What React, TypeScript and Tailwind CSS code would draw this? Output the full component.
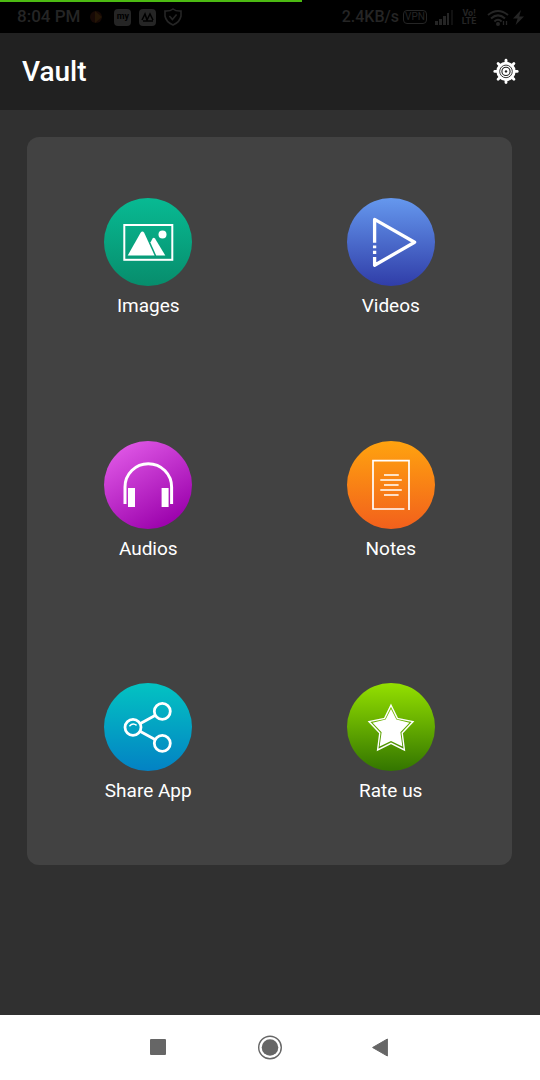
import React from "react";

interface MenuItem {
  label: string;
  from: string;
  to: string;
  diagonal?: boolean;
  glyph: React.ReactNode;
}

const menuItems: MenuItem[] = [
  {
    label: "Images",
    from: "#08ba93",
    to: "#078d6c",
    glyph: (
      <>
        <rect x="20.3" y="27" width="48" height="34.8" strokeWidth="2" />
        <path
          d="M23.7 57.4L36.6 34.8Q38.4 32.4 40.2 34.8L50.6 57.4Z"
          fill="#fff"
          stroke="none"
        />
        <path
          d="M46.4 44.4L48.6 40.6Q49.8 39 51 40.6L61.3 57.4H52.2Z"
          fill="#fff"
          stroke="none"
        />
        <circle cx="58.5" cy="36.6" r="4" fill="#fff" stroke="none" />
      </>
    ),
  },
  {
    label: "Videos",
    from: "#6598ee",
    to: "#303da8",
    glyph: (
      <path
        d="M27.6 44.8V21.4L67.6 44.3L27.6 67.2V59M27.6 47.6V50.2M27.6 52.8V56"
        strokeWidth="3.3"
        strokeLinejoin="round"
      />
    ),
  },
  {
    label: "Audios",
    from: "#e45eea",
    to: "#9a00ab",
    diagonal: true,
    glyph: (
      <>
        <path d="M21 63V46A23.3 23.3 0 0 1 67.6 46V63" strokeWidth="3" />
        <rect x="24" y="47" width="7" height="19" fill="#fff" stroke="none" />
        <rect x="57.6" y="47" width="7" height="19" fill="#fff" stroke="none" />
      </>
    ),
  },
  {
    label: "Notes",
    from: "#ffa30f",
    to: "#f2601c",
    glyph: (
      <path
        d="M57.4 68H26V19.6H62V69M37 34H51.8M33.3 39H54.8M37 44H51.6M33.3 49H54.8M37 54H51.6"
        strokeWidth="1.7"
      />
    ),
  },
  {
    label: "Share App",
    from: "#03c3c2",
    to: "#0382c4",
    glyph: (
      <>
        <circle cx="29" cy="44.3" r="8" strokeWidth="2.8" />
        <circle cx="58.3" cy="28.3" r="8" strokeWidth="2.8" />
        <circle cx="58.3" cy="60.3" r="8" strokeWidth="2.8" />
        <path d="M36.4 40.4L51 32.4M36.4 48.4L51 56.4" strokeWidth="2.8" />
        <path d="M25.4 43.2Q28.8 39.4 32.6 42.4" strokeWidth="1.4" />
      </>
    ),
  },
  {
    label: "Rate us",
    from: "#94e000",
    to: "#337500",
    glyph: (
      <>
        <path
          d="M44 22.2L50.4 35.4L66 38.6L55.2 50L57.4 67L44 60.4L30.6 67L32.8 50L22 38.6L37.6 35.4Z"
          strokeWidth="1.4"
        />
        <path
          d="M44 26L49.4 36.6L62.4 39.8L53.4 49.2L55.4 63.6L44 58L32.6 63.6L34.6 49.2L25.6 39.8L38.6 36.6Z"
          fill="#fff"
          stroke="none"
        />
      </>
    ),
  },
];

const gearTeeth = [0, 45, 90, 135, 180, 225, 270, 315];

function StatusBar() {
  return (
    <div className="h-[33px] bg-black text-[#252525]">
      <div className="h-[2px] w-[56%] bg-[#4cba12]"></div>
      <div className="flex h-[30px] items-center justify-between pl-[17px] pr-4">
        <div className="flex items-center gap-2">
          <span className="text-[17px] font-medium">8:04 PM</span>
          <svg className="h-[18px] w-[18px]" viewBox="0 0 18 18">
            <circle cx="8" cy="9" r="6" fill="#170905" />
            <path d="M7 3L14 9L7 15Z" fill="#241606" />
          </svg>
          <div className="flex h-[17px] w-[17px] items-center justify-center rounded bg-[#252525] text-[9px] font-bold text-black">
            my
          </div>
          <svg className="h-[17px] w-[17px]" viewBox="0 0 17 17">
            <rect width="17" height="17" rx="4" fill="currentColor" />
            <path
              d="M3 11L6 5L8 11L11 5L14 11M4 12H14"
              fill="none"
              stroke="#000"
              strokeWidth="1.6"
            />
          </svg>
          <svg
            className="h-[18px] w-[18px]"
            viewBox="0 0 18 18"
            fill="none"
            stroke="currentColor"
            strokeWidth="1.6"
          >
            <path d="M9 1Q12 3.4 17 3V8Q16 14 9 17Q2 14 1 8V3Q6 3.4 9 1Z" />
            <path d="M5.4 8L8.4 11.4L12.6 6.4" />
          </svg>
        </div>
        <div className="flex items-center gap-1">
          <span className="text-base font-medium">2.4KB/s</span>
          <span className="w-6 rounded-sm border border-[#252525] text-center text-[10px] leading-3">
            VPN
          </span>
          <svg className="ml-1 h-4 w-5" viewBox="0 0 20 16">
            <path
              d="M0 12H3V16H0ZM4 10H7V16H4ZM8 7H11V16H8ZM12 4H14V16H12Z"
              fill="currentColor"
            />
            <path d="M16 1H18V16H16Z" fill="#111" />
          </svg>
          <span className="flex w-5 flex-col text-center text-[9px] font-bold leading-2">
            <span>Vo!</span>
            <span>LTE</span>
          </span>
          <svg
            className="ml-1 h-[17px] w-[22px]"
            viewBox="0 0 22 17"
            fill="none"
            stroke="currentColor"
            strokeWidth="2"
          >
            <path d="M1 6Q11 -2 21 6M4 9.4Q11 3.4 18 9.4M7.4 12.4Q11 9 14.6 12.4" />
            <circle cx="11" cy="15" r="1" fill="currentColor" />
            <path d="M16.5 12V16M19.5 12V16" strokeWidth="1.3" />
          </svg>
          <svg className="h-[15px] w-[11px]" viewBox="0 0 11 15">
            <path d="M8 0L0 8.4H4.6L2.6 15L11 6.4H6.2Z" fill="currentColor" />
          </svg>
        </div>
      </div>
    </div>
  );
}

function SettingsIcon() {
  return (
    <svg className="h-7 w-7" viewBox="0 0 28 28" fill="none" stroke="#fff">
      {gearTeeth.map((angle) => (
        <path
          key={angle}
          d="M14 6V2.2"
          strokeWidth="2.8"
          strokeLinecap="round"
          transform={`rotate(${angle} 14 13.4)`}
        />
      ))}
      <circle cx="14" cy="13.4" r="9.6" fill="#fff" stroke="none" />
      <circle cx="14" cy="13.4" r="6.3" stroke="#212121" strokeWidth="0.9" />
      <circle cx="14" cy="13.4" r="4.1" stroke="#212121" strokeWidth="1.1" />
      <circle cx="14" cy="13.4" r="1.2" fill="#212121" stroke="none" />
    </svg>
  );
}

function MenuButton({ item, index }: { item: MenuItem; index: number }) {
  const gradientId = `menu-gradient-${index}`;

  return (
    <button
      type="button"
      className="flex aspect-square cursor-pointer flex-col items-center justify-center gap-2"
    >
      <svg
        className="h-[88px] w-[88px]"
        viewBox="0 0 88 88"
        fill="none"
        stroke="#fff"
      >
        <defs>
          <linearGradient
            id={gradientId}
            x1={item.diagonal ? "0.1" : "0"}
            y1={item.diagonal ? "0" : "0"}
            x2={item.diagonal ? "0.7" : "0"}
            y2={item.diagonal ? "1" : "1"}
          >
            <stop offset="0" stopColor={item.from} />
            <stop offset="1" stopColor={item.to} />
          </linearGradient>
        </defs>
        <circle
          cx="44"
          cy="44"
          r="44"
          fill={`url(#${gradientId})`}
          stroke="none"
        />
        {item.glyph}
      </svg>
      <span className="text-[19px] leading-6">{item.label}</span>
    </button>
  );
}

export default function App() {
  return (
    <div className="flex min-h-screen flex-col bg-[#303030] font-['Roboto',sans-serif] text-white">
      <StatusBar />

      {/* App bar */}
      <header className="flex h-[77px] items-center justify-between bg-[#212121] pl-[22px] pr-5">
        <h1 className="text-[28px] font-medium leading-8">Vault</h1>
        <button type="button" aria-label="Settings" className="cursor-pointer">
          <SettingsIcon />
        </button>
      </header>

      {/* Vault sections */}
      <main className="flex-1 pb-7 pl-[27px] pr-7 pt-[27px]">
        <div className="grid grid-cols-2 rounded-xl bg-[#424242]">
          {menuItems.map((item, index) => (
            <MenuButton key={item.label} item={item} index={index} />
          ))}
        </div>
      </main>

      {/* System navigation */}
      <nav className="flex h-[65px] items-center justify-center gap-[82px] bg-white text-[#666666]">
        <button type="button" aria-label="Recent apps">
          <svg className="h-7 w-7" viewBox="0 0 28 28" fill="currentColor">
            <rect x="4" y="5" width="16" height="16" rx="1" />
          </svg>
        </button>
        <button type="button" aria-label="Home">
          <svg className="h-7 w-7" viewBox="0 0 28 28" fill="currentColor">
            <circle cx="14" cy="13.5" r="8.3" />
            <circle
              cx="14"
              cy="13.5"
              r="11.3"
              fill="none"
              stroke="currentColor"
              strokeWidth="1.4"
            />
          </svg>
        </button>
        <button type="button" aria-label="Back">
          <svg className="h-7 w-7" viewBox="0 0 28 28" fill="currentColor">
            <path
              d="M6.6 13.5L21.4 5V22Z"
              stroke="currentColor"
              strokeLinejoin="round"
            />
          </svg>
        </button>
      </nav>
    </div>
  );
}
